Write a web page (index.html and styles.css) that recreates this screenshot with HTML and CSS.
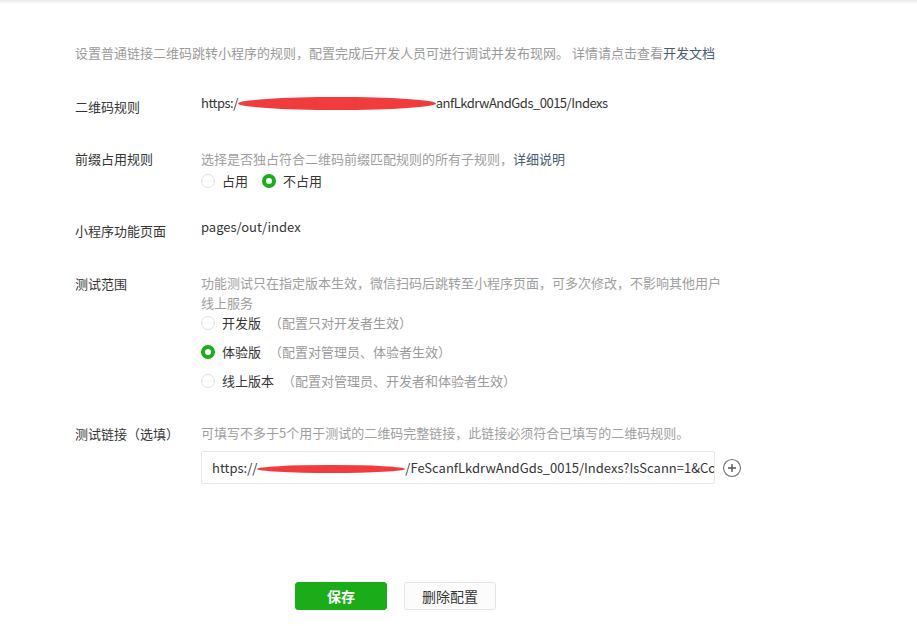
FILE: index.html
```
<!DOCTYPE html>
<html lang="zh-CN">
<head>
  <meta charset="UTF-8" />
  <meta name="viewport" content="width=device-width, initial-scale=1.0" />
  <title>扫普通链接二维码打开小程序</title>
  <link rel="stylesheet" href="styles.css">
</head>
<body>
  <div class="page">
    <p class="intro">设置普通链接二维码跳转小程序的规则，配置完成后开发人员可进行调试并发布现网。 详情请点击查看<a href="#">开发文档</a></p>

    <div class="row">
      <div class="label label-value">二维码规则</div>
      <div class="field">
        <div class="value url">https:/<span class="redact redact-rule"></span>anfLkdrwAndGds_0015/Indexs</div>
      </div>
    </div>

    <div class="row row-tight">
      <div class="label">前缀占用规则</div>
      <div class="field">
        <div class="desc">选择是否独占符合二维码前缀匹配规则的所有子规则，<a href="#">详细说明</a></div>
        <div class="radios radios-inline">
          <label class="radio"><span class="dot"></span>占用</label>
          <label class="radio checked"><span class="dot"></span>不占用</label>
        </div>
      </div>
    </div>

    <div class="row">
      <div class="label label-value">小程序功能页面</div>
      <div class="field">
        <div class="value">pages/out/index</div>
      </div>
    </div>

    <div class="row">
      <div class="label label-desc">测试范围</div>
      <div class="field">
        <div class="desc desc-wrap">功能测试只在指定版本生效，微信扫码后跳转至小程序页面，可多次修改，不影响其他用户线上服务</div>
        <div class="radios">
          <label class="radio"><span class="dot"></span>开发版<span class="note">（配置只对开发者生效）</span></label>
          <label class="radio checked"><span class="dot"></span>体验版<span class="note">（配置对管理员、体验者生效）</span></label>
          <label class="radio"><span class="dot"></span>线上版本<span class="note">（配置对管理员、开发者和体验者生效）</span></label>
        </div>
      </div>
    </div>

    <div class="row">
      <div class="label label-desc">测试链接（选填）</div>
      <div class="field">
        <div class="desc">可填写不多于5个用于测试的二维码完整链接，此链接必须符合已填写的二维码规则。</div>
        <div class="link-line">
          <div class="input">https://<span class="redact redact-link"></span>/FeScanfLkdrwAndGds_0015/Indexs?IsScann=1&amp;CodeId=2</div>
          <span class="add">
            <svg width="20" height="20" viewBox="0 0 20 20"><circle cx="10" cy="10" r="8.5" fill="none" stroke="#777" stroke-width="1.2"/><path d="M10 6v8M6 10h8" stroke="#555" stroke-width="1.4"/></svg>
          </span>
        </div>
      </div>
    </div>

    <div class="actions">
      <button class="btn btn-primary">保存</button>
      <button class="btn">删除配置</button>
    </div>
  </div>
</body>
</html>
```

FILE: styles.css
```
html { background: #fff; }
body {
  margin: 0;
  font-family: "Noto Sans CJK SC", "Open Sans", sans-serif;
  font-size: 13px;
  line-height: 20px;
  color: #353535;
  background: linear-gradient(#e9e9e9, #fff) no-repeat;
  background-size: 100% 4px;
}
a { color: #4a5a70; text-decoration: none; }

.page { padding: 43px 0 0 75px; }
.intro { margin: 0 0 30px; color: #9a9a9a; }

/* Form rows */
.row { display: flex; align-items: flex-start; margin-bottom: 32px; }
.row-tight { margin-bottom: 26px; }
.label { width: 126px; flex-shrink: 0; }
.label-value { padding-top: 4px; }
.label-desc { padding-top: 1px; }
.value { white-space: nowrap; }
.url { letter-spacing: -0.5px; }
.desc { color: #9e9e9e; }
.desc-wrap { width: 530px; }

/* Scribbled-out parts of urls */
.redact { display: inline-block; position: relative; vertical-align: top; height: 20px; }
.redact:after {
  content: '';
  position: absolute;
  left: 0; right: 0;
  background: #f03c3c;
  border-radius: 50%;
}
.redact-rule { width: 198px; }
.redact-rule:after { top: 4px; height: 13px; }
.redact-link { width: 148px; }
.redact-link:after { top: 7px; height: 8px; }

/* Radios */
.radios { display: flex; flex-direction: column; gap: 9px; }
.radios-inline { flex-direction: row; gap: 14px; margin-top: 2px; }
.radio { display: flex; align-items: center; cursor: pointer; }
.dot {
  width: 14px; height: 14px;
  box-sizing: border-box;
  border: 1px solid #e2e2e2;
  border-radius: 50%;
  margin-right: 7px;
  background: #fff;
}
.radio.checked .dot { border: 4px solid #1aad19; }
.note { color: #9a9a9a; margin-left: 8px; }

/* Test link input */
.link-line { display: flex; align-items: center; margin-top: 8px; }
.input {
  width: 514px; height: 33px;
  box-sizing: border-box;
  border: 1px solid #e7e7e7;
  border-radius: 2px;
  padding: 6px 10px;
  white-space: nowrap;
  overflow: hidden;
}
.add { display: flex; margin-left: 7px; cursor: pointer; }

/* Buttons */
.actions { display: flex; gap: 17px; margin: 98px 0 0 220px; }
.btn {
  width: 92px; height: 28px;
  font: inherit;
  font-size: 14px;
  color: #353535;
  background: #fcfcfc;
  border: 1px solid #e4e4e4;
  border-radius: 3px;
  cursor: pointer;
}
.btn-primary { background: #1aad19; border-color: #1aad19; color: #fff; font-weight: bold; }
```
